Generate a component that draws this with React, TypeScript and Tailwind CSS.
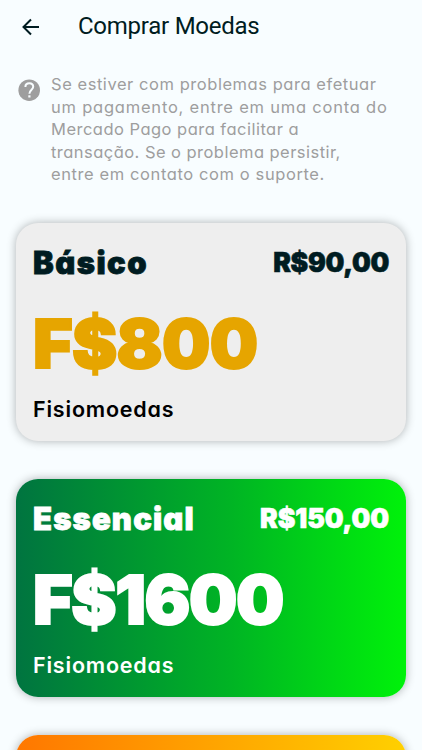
import clsx from "clsx";

interface Plan {
  name: string;
  price: string;
  coins: string;
  card: string;
  title: string;
  amount: string;
  label: string;
  nameSpacing: string;
  priceSpacing: string;
  amountSpacing: string;
}

const plans: Plan[] = [
  {
    name: "Básico",
    price: "R$90,00",
    coins: "F$800",
    card: "bg-[#eeeeee]",
    title: "text-[#001c21]",
    amount: "text-[#e6a500]",
    label: "text-black",
    nameSpacing: "tracking-[1.5px]",
    priceSpacing: "tracking-[-0.3px]",
    amountSpacing: "tracking-[-0.7px]",
  },
  {
    name: "Essencial",
    price: "R$150,00",
    coins: "F$1600",
    card: "bg-[linear-gradient(to_right,#007440,#00b424_55%,#00f20a)]",
    title: "text-white",
    amount: "text-white",
    label: "text-white",
    nameSpacing: "tracking-[1.15px]",
    priceSpacing: "tracking-[-0.1px]",
    amountSpacing: "tracking-[-1.4px]",
  },
];

const helpLines = [
  { text: "Se estiver com problemas para efetuar", spacing: "tracking-[0.55px]" },
  { text: "um pagamento, entre em uma conta do", spacing: "tracking-[0.78px]" },
  { text: "Mercado Pago para facilitar a", spacing: "tracking-[0.48px]" },
  { text: "transação. Se o problema persistir,", spacing: "tracking-[0.46px]" },
  { text: "entre em contato com o suporte.", spacing: "tracking-[0.6px]" },
];

function Header() {
  return (
    <header className="flex h-[53px] items-center pl-[19px]">
      <button aria-label="Voltar" className="size-6">
        <svg viewBox="0 0 24 24" className="size-6" fill="none" stroke="#001c21" strokeWidth="2">
          <path d="M20 12H4.500M12 4.500L4.500 12l7.500 7.500" />
        </svg>
      </button>
      <h1 className="mb-px ml-[35px] font-[Roboto,sans-serif] text-2xl leading-8 tracking-[-0.25px] text-[#001c21]">Comprar Moedas</h1>
    </header>
  );
}

function PlanCard({ plan }: { plan: Plan }) {
  return (
    <section className={clsx("h-[218px] shrink-0 rounded-[22px] px-[17px] pt-[19px] shadow-[0_0_10px_rgba(0,0,0,0.3)]", plan.card)}>
      <div className={clsx("flex h-[41px] items-start justify-between font-black", plan.title)}>
        <h2 className={clsx("text-[31px] leading-[42px] [-webkit-text-stroke:0.8px]", plan.nameSpacing)}>{plan.name}</h2>
        <span className={clsx("text-[26.5px] leading-10 [-webkit-text-stroke:0.6px]", plan.priceSpacing)}>{plan.price}</span>
      </div>
      <p className={clsx("mt-5 text-[68px] font-black leading-[80px] [-webkit-text-stroke:2px]", plan.amount, plan.amountSpacing)}>
        {plan.coins}
      </p>
      <p className={clsx("mt-3 text-[21.5px] font-semibold leading-7 tracking-[0.8px]", plan.label)}>Fisiomoedas</p>
    </section>
  );
}

export default function App() {
  return (
    <main className="h-[750px] w-[422px] overflow-hidden bg-[#f8fdff] font-[Inter,sans-serif] [font-feature-settings:'cv11']">
      <Header />
      <div className="mt-5 flex h-[113px] gap-[10px] pl-4 text-[#9e9e9e]">
        <svg viewBox="0 0 26 26" className="mt-1 -mr-px size-[26px] shrink-0" fill="none">
          <circle cx="13.2" cy="13.2" r="10.8" fill="currentColor" />
          <path d="M9.400 9.900C9.400 7.700 11.100 6.300 13.300 6.300s3.900 1.400 3.900 3.500c0 2.800-3.800 3.100-3.800 6.900" stroke="#f8fdff" strokeWidth="2" />
          <path d="M12.300 18.300h2.200v2.200h-2.200z" fill="#f8fdff" />
        </svg>
        <div className="text-[16.5px] leading-[22.5px]">
          {helpLines.map((line) => (
            <p key={line.text} className={clsx("whitespace-nowrap", line.spacing)}>
              {line.text}
            </p>
          ))}
        </div>
      </div>
      <div className="mt-[37px] flex flex-col gap-[38px] px-4">
        {plans.map((plan) => (
          <PlanCard key={plan.name} plan={plan} />
        ))}
        <section className="h-[218px] rounded-[22px] bg-[linear-gradient(to_right,#ff7700,#ffd000)] shadow-[0_0_10px_rgba(0,0,0,0.3)]" />
      </div>
    </main>
  );
}
